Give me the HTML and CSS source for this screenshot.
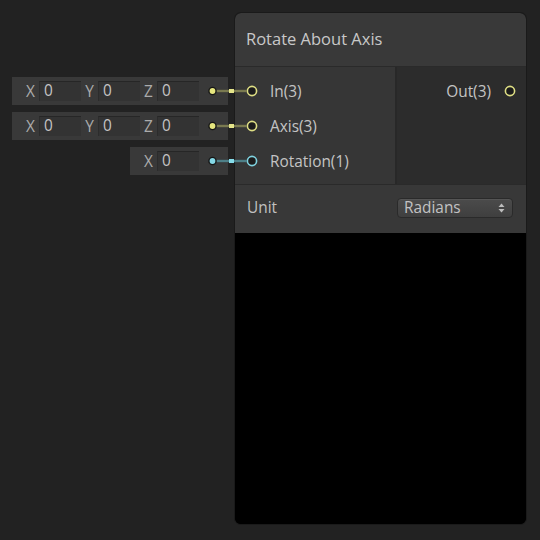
FILE: index.html
```html
<!DOCTYPE html>
<html>
<head>
<meta charset="utf-8">
<link rel="stylesheet" href="styles.css">
</head>
<body>
<div class="canvas">
  <div class="node">
    <div class="node-header">Rotate About Axis</div>
    <div class="ports">
      <div class="ports-in">
        <div class="port">
          <svg class="port-dot" width="12" height="12" viewBox="0 0 12 12"><circle cx="6" cy="6" r="4.6" fill="#1c1c1c" stroke="#dede84" stroke-width="1.6"/></svg>
          <span>In(3)</span>
        </div>
        <div class="port">
          <svg class="port-dot" width="12" height="12" viewBox="0 0 12 12"><circle cx="6" cy="6" r="4.6" fill="#1c1c1c" stroke="#dede84" stroke-width="1.6"/></svg>
          <span>Axis(3)</span>
        </div>
        <div class="port">
          <svg class="port-dot" width="12" height="12" viewBox="0 0 12 12"><circle cx="6" cy="6" r="4.6" fill="#1c1c1c" stroke="#7fd2df" stroke-width="1.6"/></svg>
          <span>Rotation(1)</span>
        </div>
      </div>
      <div class="ports-out">
        <div class="port port-right">
          <span>Out(3)</span>
          <svg class="port-dot" width="12" height="12" viewBox="0 0 12 12"><circle cx="6" cy="6" r="4.6" fill="#1c1c1c" stroke="#dede84" stroke-width="1.6"/></svg>
        </div>
      </div>
    </div>
    <div class="unit-row">
      <span>Unit</span>
      <div class="dropdown">
        <span>Radians</span>
        <svg width="7" height="10" viewBox="0 0 7 10"><path d="M3.5 0.5 L6.5 4 L0.5 4 Z" fill="#bdbdbd"/><path d="M3.5 9.5 L6.5 6 L0.5 6 Z" fill="#bdbdbd"/></svg>
      </div>
    </div>
    <div class="preview"></div>
  </div>

  <div class="inputs">
    <div class="in-row">
      <span class="axis">X</span><span class="field">0</span>
      <span class="axis">Y</span><span class="field">0</span>
      <span class="axis">Z</span><span class="field">0</span>
      <svg class="wire" width="40" height="12" viewBox="0 0 40 12"><line x1="8" y1="6" x2="40" y2="6" stroke="#7a7a50" stroke-width="2.4"/><rect x="22" y="4" width="5" height="4" fill="#e4e48a"/><circle cx="5.5" cy="6" r="3.6" fill="#e6e67e" stroke="#161616" stroke-width="1.4"/></svg>
    </div>
    <div class="in-row">
      <span class="axis">X</span><span class="field">0</span>
      <span class="axis">Y</span><span class="field">0</span>
      <span class="axis">Z</span><span class="field">0</span>
      <svg class="wire" width="40" height="12" viewBox="0 0 40 12"><line x1="8" y1="6" x2="40" y2="6" stroke="#7a7a50" stroke-width="2.4"/><rect x="22" y="4" width="5" height="4" fill="#e4e48a"/><circle cx="5.5" cy="6" r="3.6" fill="#e6e67e" stroke="#161616" stroke-width="1.4"/></svg>
    </div>
    <div class="in-row">
      <span class="axis">X</span><span class="field">0</span>
      <svg class="wire" width="40" height="12" viewBox="0 0 40 12"><line x1="8" y1="6" x2="40" y2="6" stroke="#4e8088" stroke-width="2.4"/><rect x="22" y="4" width="5" height="4" fill="#86dcea"/><circle cx="5.5" cy="6" r="3.6" fill="#84d8e6" stroke="#161616" stroke-width="1.4"/></svg>
    </div>
  </div>
</div>
</body>
</html>
```

FILE: styles.css
```css
html, body {
  margin: 0;
  padding: 0;
  background: #222222;
}

body {
  width: 540px;
  height: 540px;
  overflow: hidden;
  font-family: "Open Sans", "DejaVu Sans", sans-serif;
  color: #c4c4c4;
}

.canvas {
  position: relative;
  width: 540px;
  height: 540px;
}

.node {
  position: absolute;
  left: 235px;
  top: 13px;
  width: 291px;
  height: 511px;
  border-radius: 6px;
  overflow: hidden;
  background: #000;
  box-shadow: 0 0 0 1px #1a1a1a;
  display: flex;
  flex-direction: column;
}

.node-header {
  height: 54px;
  flex: none;
  background: #393939;
  border-bottom: 1px solid #2a2a2a;
  display: flex;
  align-items: center;
  padding-left: 11px;
  padding-bottom: 2px;
  box-sizing: border-box;
  font-size: 16.5px;
  color: #c8c8c8;
}

.ports {
  height: 118px;
  flex: none;
  box-sizing: border-box;
  display: flex;
  border-bottom: 1px solid #2a2a2a;
}

.ports-in {
  width: 162px;
  background: #363636;
  border-right: 2px solid #282828;
  display: flex;
  flex-direction: column;
  gap: 15px;
  padding-top: 14px;
  box-sizing: border-box;
}

.ports-out {
  flex: 1;
  background: #2c2c2c;
  display: flex;
  flex-direction: column;
  padding-top: 14px;
}

.port {
  height: 20px;
  display: flex;
  align-items: center;
  padding-left: 11px;
  font-size: 15.4px;
  color: #c4c4c4;
}

.port .port-dot {
  margin-right: 12px;
  flex: none;
}

.port-right {
  justify-content: flex-end;
  padding-left: 0;
  padding-right: 10px;
}

.port-right .port-dot {
  margin-right: 0;
  margin-left: 13px;
}

.unit-row {
  height: 48px;
  flex: none;
  box-sizing: border-box;
  background: #383838;
  display: flex;
  align-items: center;
  justify-content: space-between;
  padding: 0 13px 3px 12px;
  font-size: 15.4px;
  color: #c0c0c0;
}

.dropdown {
  width: 116px;
  height: 20px;
  box-sizing: border-box;
  border: 1px solid #2a2a2a;
  border-radius: 4px;
  background: linear-gradient(#4b4b4b, #3f3f3f);
  box-shadow: inset 0 1px 0 #555;
  display: flex;
  align-items: center;
  justify-content: space-between;
  padding: 0 7px 0 6px;
  font-size: 15.4px;
  color: #c2c2c2;
}

.preview {
  flex: 1;
  background: #000;
}

.inputs {
  position: absolute;
  left: 12px;
  top: 77px;
  width: 216px;
  display: flex;
  flex-direction: column;
  align-items: flex-end;
  gap: 7px;
}

.in-row {
  position: relative;
  height: 28px;
  box-sizing: border-box;
  background: #393939;
  display: flex;
  align-items: center;
  padding: 0 29px 0 10px;
  font-size: 15.4px;
}

.axis {
  width: 17px;
  text-align: center;
  color: #ababab;
}

.field {
  width: 42px;
  height: 20px;
  box-sizing: border-box;
  background: #333333;
  border-top: 1px solid #262626;
  border-left: 1px solid #2c2c2c;
  padding-left: 4px;
  line-height: 18px;
  color: #c4c4c4;
}

.wire {
  position: absolute;
  right: -19px;
  top: 8px;
}
```
